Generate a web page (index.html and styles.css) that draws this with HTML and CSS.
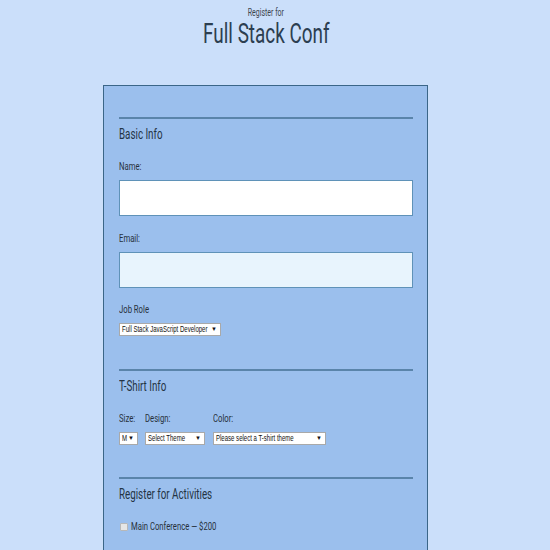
FILE: index.html
```html
<!DOCTYPE html>
<html>
<head>
<meta charset="utf-8">
<link rel="stylesheet" href="styles.css">
</head>
<body>
<header class="header">
  <span class="pre"><span class="sx sx-c">Register for</span></span>
  <h1 class="title"><span class="sx sx-c">Full Stack Conf</span></h1>
</header>
<form class="card">
  <section class="group">
    <hr class="rule">
    <h2 class="legend"><span class="sx">Basic Info</span></h2>
    <label class="label"><span class="sx">Name:</span></label>
    <input class="field" type="text">
    <label class="label label-email"><span class="sx">Email:</span></label>
    <input class="field field-focus" type="text">
    <label class="label label-job"><span class="sx">Job Role</span></label>
    <div class="select sel-job"><span class="sx">Full Stack JavaScript Developer</span><i class="arrow">▼</i></div>
  </section>
  <section class="group">
    <hr class="rule rule-2">
    <h2 class="legend"><span class="sx">T-Shirt Info</span></h2>
    <div class="shirt">
      <div class="col col-size">
        <label class="label"><span class="sx">Size:</span></label>
        <div class="select sel-size"><span class="sx">M</span><i class="arrow">▼</i></div>
      </div>
      <div class="col col-design">
        <label class="label"><span class="sx">Design:</span></label>
        <div class="select sel-design"><span class="sx">Select Theme</span><i class="arrow">▼</i></div>
      </div>
      <div class="col">
        <label class="label"><span class="sx">Color:</span></label>
        <div class="select sel-color"><span class="sx">Please select a T-shirt theme</span><i class="arrow">▼</i></div>
      </div>
    </div>
  </section>
  <section class="group">
    <hr class="rule rule-3">
    <h2 class="legend"><span class="sx">Register for Activities</span></h2>
    <label class="check"><span class="box"></span><span class="sx">Main Conference — $200</span></label>
  </section>
</form>
</body>
</html>
```
FILE: styles.css
```css
html, body {
  margin: 0;
  padding: 0;
}
body {
  background: #cbdffa;
  font-family: Roboto, "Liberation Sans", sans-serif;
  color: #2f3b4a;
  height: 550px;
  overflow: hidden;
}
.sx {
  display: inline-block;
  white-space: nowrap;
  transform: scaleX(0.7);
  transform-origin: 0 50%;
}
.sx-c {
  transform-origin: 50% 50%;
}
.header {
  display: flex;
  flex-direction: column;
  align-items: center;
  padding-top: 7px;
  margin-left: -18px;
}
.pre {
  font-size: 10px;
  line-height: 12px;
  color: #3d4650;
}
.title {
  margin: 0;
  font-weight: normal;
  font-size: 27px;
  line-height: 30px;
  color: #2c3e50;
}
.card {
  display: block;
  margin: 36px 0 0 103px;
  width: 294px;
  padding: 31px 14px 40px 15px;
  background: #9bbfed;
  border: 1px solid #3b6688;
  border-bottom: none;
}
.group {
  display: flex;
  flex-direction: column;
  align-items: flex-start;
}
.rule {
  width: 100%;
  height: 2px;
  margin: 0;
  border: none;
  background: #5a84aa;
}
.rule-2 { margin-top: 33px; }
.rule-3 { margin-top: 32px; }
.legend {
  margin: 7px 0 0;
  font-weight: normal;
  font-size: 14px;
  line-height: 16px;
  color: #243444;
}
.label {
  display: block;
  margin-top: 19px;
  font-size: 11px;
  line-height: 12px;
  color: #27313c;
}
.label-email { margin-top: 17px; }
.label-job { margin-top: 16px; }
.field {
  display: block;
  box-sizing: border-box;
  width: 100%;
  height: 36px;
  margin-top: 7px;
  background: #ffffff;
  border: 1px solid #5f92b8;
  border-radius: 0;
  outline: none;
}
.field-focus {
  background: #e8f4fd;
}
.select {
  position: relative;
  box-sizing: border-box;
  display: block;
  height: 13px;
  margin-top: 7px;
  padding: 0 0 0 2px;
  background: #ffffff;
  border: 1px solid #a9a9a9;
  font-family: "Liberation Sans", Arial, sans-serif;
  font-size: 9px;
  line-height: 11px;
  color: #111;
  overflow: hidden;
  white-space: nowrap;
}
.select .sx {
  transform: scaleX(0.67);
  vertical-align: top;
}
.arrow {
  position: absolute;
  right: 3px;
  top: 0;
  font-style: normal;
  font-size: 6px;
  line-height: 11px;
}
.sel-job { width: 102px; }
.sel-size { width: 19px; }
.sel-design { width: 60px; }
.sel-color { width: 113px; }
.shirt {
  display: flex;
  gap: 7px;
}
.col-size { width: 19px; }
.col-design { width: 61px; }
.check {
  display: flex;
  align-items: center;
  margin-top: 19px;
  font-size: 11px;
  line-height: 12px;
  color: #27313c;
}
.box {
  width: 6px;
  height: 6px;
  margin: 0 3px 0 1px;
  background: #e6e6e6;
  border: 1px solid #b8b8b8;
  border-radius: 1px;
}
```
